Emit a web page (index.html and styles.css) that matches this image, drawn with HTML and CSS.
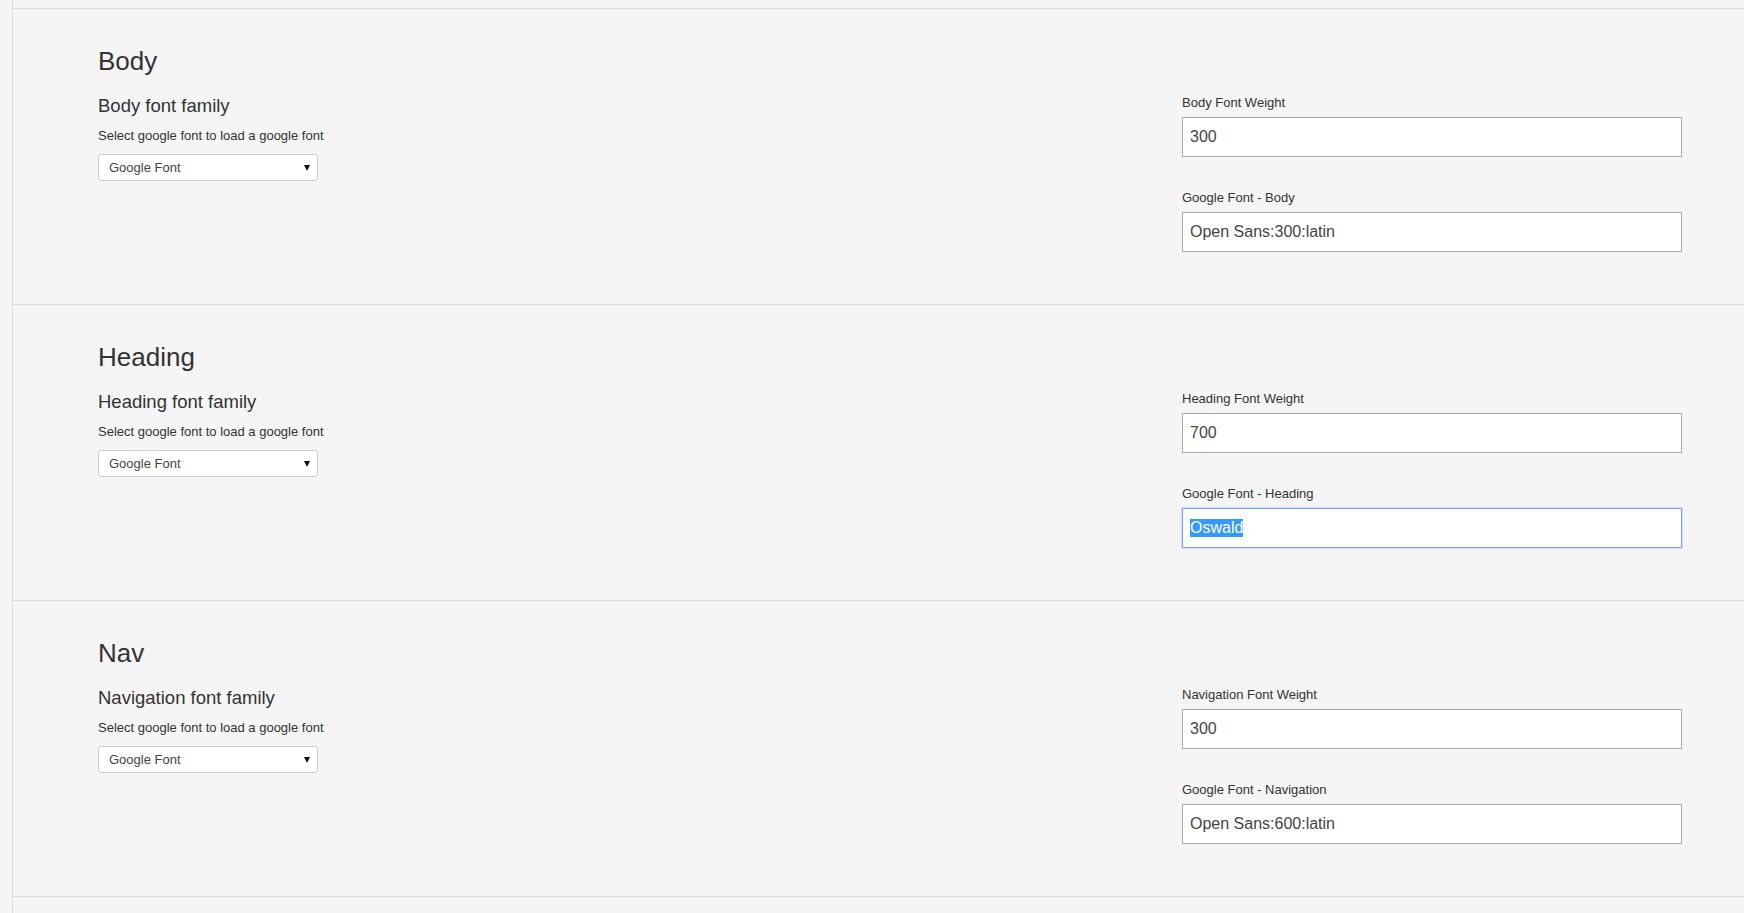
FILE: index.html
```html
<!DOCTYPE html>
<html lang="en">
  <head>
    <meta charset="UTF-8" />
    <meta name="viewport" content="width=device-width, initial-scale=1.0" />
    <title>Typography Settings</title>
    <link rel="stylesheet" href="styles.css">
  </head>
  <body>
    <div class="page">

      <section class="panel">
        <h3 class="panel-title">Body</h3>
        <div class="panel-row">
          <div class="font-pick">
            <h4>Body font family</h4>
            <p>Select google font to load a google font</p>
            <div class="select-wrap">
              <select><option>Google Font</option></select>
            </div>
          </div>
          <div class="font-fields">
            <label>Body Font Weight</label>
            <input type="text" value="300" />
            <label class="second">Google Font - Body</label>
            <input type="text" value="Open Sans:300:latin" />
          </div>
        </div>
      </section>

      <section class="panel">
        <h3 class="panel-title">Heading</h3>
        <div class="panel-row">
          <div class="font-pick">
            <h4>Heading font family</h4>
            <p>Select google font to load a google font</p>
            <div class="select-wrap">
              <select><option>Google Font</option></select>
            </div>
          </div>
          <div class="font-fields">
            <label>Heading Font Weight</label>
            <input type="text" value="700" />
            <label class="second">Google Font - Heading</label>
            <div class="fake-input focused"><span class="picked">Oswald</span></div>
          </div>
        </div>
      </section>

      <section class="panel">
        <h3 class="panel-title">Nav</h3>
        <div class="panel-row">
          <div class="font-pick">
            <h4>Navigation font family</h4>
            <p>Select google font to load a google font</p>
            <div class="select-wrap">
              <select><option>Google Font</option></select>
            </div>
          </div>
          <div class="font-fields">
            <label>Navigation Font Weight</label>
            <input type="text" value="300" />
            <label class="second">Google Font - Navigation</label>
            <input type="text" value="Open Sans:600:latin" />
          </div>
        </div>
      </section>

    </div>
  </body>
</html>
```

FILE: styles.css
```css
html, body {
  margin: 0;
  background: #f5f5f5;
  overflow: hidden;
}
body {
  font-family: "Liberation Sans", Arial, sans-serif;
  color: #333;
}
.page {
  margin-left: 12px;
  border-left: 1px solid #ddd;
  padding-top: 8px;
  min-height: 100vh;
  box-sizing: border-box;
}
.panel {
  border-bottom: 1px solid #ddd;
  padding: 37px 62px 52px 85px;
}
.panel:first-child {
  border-top: 1px solid #ddd;
}
.panel-title {
  margin: 0 0 19px;
  font-size: 26px;
  line-height: 30px;
  font-weight: normal;
}
.panel-row {
  display: flex;
  justify-content: space-between;
  align-items: flex-start;
}
.font-pick h4 {
  margin: 0;
  font-size: 18.5px;
  line-height: 22px;
  font-weight: normal;
}
.font-pick p {
  margin: 11px 0 0;
  font-size: 13px;
  line-height: 15px;
}
.select-wrap {
  position: relative;
  width: 220px;
  margin-top: 11px;
}
.select-wrap select {
  appearance: none;
  -webkit-appearance: none;
  box-sizing: border-box;
  display: block;
  width: 100%;
  height: 27px;
  border: 1px solid #ccc;
  border-radius: 3px;
  background: #fff;
  padding: 0 0 0 10px;
  font-family: "Liberation Sans", Arial, sans-serif;
  font-size: 13px;
  color: #444;
  outline: none;
}
.select-wrap::after {
  content: "";
  position: absolute;
  right: 8px;
  top: 11px;
  border-left: 3.5px solid transparent;
  border-right: 3.5px solid transparent;
  border-top: 6px solid #111;
  pointer-events: none;
}
.font-fields {
  width: 500px;
  display: flex;
  flex-direction: column;
}
.font-fields label {
  font-size: 13px;
  line-height: 15px;
}
.font-fields label.second {
  margin-top: 33px;
}
.font-fields input,
.fake-input {
  box-sizing: border-box;
  width: 100%;
  height: 40px;
  margin-top: 7px;
  border: 1px solid #aaa;
  background: #fff;
  padding: 0 7px;
  font-family: "Liberation Sans", Arial, sans-serif;
  font-size: 16px;
  color: #444;
  outline: none;
}
.fake-input {
  display: flex;
  align-items: center;
}
.fake-input.focused {
  border-color: #74a2e6;
  box-shadow: 0 0 2px rgba(100, 150, 230, 0.6);
}
.picked {
  background: #3399ff;
  color: #fff;
}
```
